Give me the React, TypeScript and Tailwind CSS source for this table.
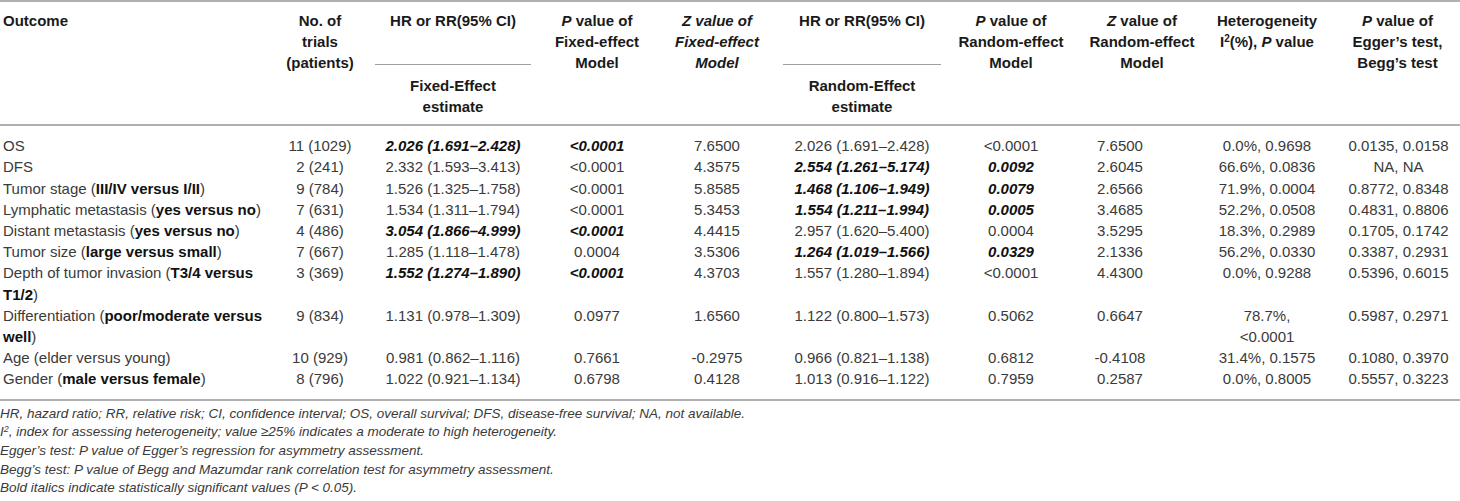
import type { ReactNode } from "react";

const GRID =
  "grid grid-cols-[275px_90px_176px_112px_128px_162px_136px_126px_124px_131px]";

type Cell = string | { b: string } | ReactNode[];

type Row = {
  outcome: ReactNode;
  cells: Cell[];
};

const B = ({ children }: { children: ReactNode }) => (
  <b className="font-bold text-[#111]">{children}</b>
);

const rows: Row[] = [
  {
    outcome: "OS",
    cells: ["11 (1029)", { b: "2.026 (1.691–2.428)" }, { b: "<0.0001" }, "7.6500", "2.026 (1.691–2.428)", "<0.0001", "7.6500", "0.0%, 0.9698", "0.0135, 0.0158"],
  },
  {
    outcome: "DFS",
    cells: ["2 (241)", "2.332 (1.593–3.413)", "<0.0001", "4.3575", { b: "2.554 (1.261–5.174)" }, { b: "0.0092" }, "2.6045", "66.6%, 0.0836", "NA, NA"],
  },
  {
    outcome: (
      <>
        Tumor stage (<B>III/IV versus I/II</B>)
      </>
    ),
    cells: ["9 (784)", "1.526 (1.325–1.758)", "<0.0001", "5.8585", { b: "1.468 (1.106–1.949)" }, { b: "0.0079" }, "2.6566", "71.9%, 0.0004", "0.8772, 0.8348"],
  },
  {
    outcome: (
      <>
        Lymphatic metastasis (<B>yes versus no</B>)
      </>
    ),
    cells: ["7 (631)", "1.534 (1.311–1.794)", "<0.0001", "5.3453", { b: "1.554 (1.211–1.994)" }, { b: "0.0005" }, "3.4685", "52.2%, 0.0508", "0.4831, 0.8806"],
  },
  {
    outcome: (
      <>
        Distant metastasis (<B>yes versus no</B>)
      </>
    ),
    cells: ["4 (486)", { b: "3.054 (1.866–4.999)" }, { b: "<0.0001" }, "4.4415", "2.957 (1.620–5.400)", "0.0004", "3.5295", "18.3%, 0.2989", "0.1705, 0.1742"],
  },
  {
    outcome: (
      <>
        Tumor size (<B>large versus small</B>)
      </>
    ),
    cells: ["7 (667)", "1.285 (1.118–1.478)", "0.0004", "3.5306", { b: "1.264 (1.019–1.566)" }, { b: "0.0329" }, "2.1336", "56.2%, 0.0330", "0.3387, 0.2931"],
  },
  {
    outcome: (
      <>
        <span className="block">
          Depth of tumor invasion (<B>T3/4 versus</B>
        </span>
        <span className="block">
          <B>T1/2</B>)
        </span>
      </>
    ),
    cells: ["3 (369)", { b: "1.552 (1.274–1.890)" }, { b: "<0.0001" }, "4.3703", "1.557 (1.280–1.894)", "<0.0001", "4.4300", "0.0%, 0.9288", "0.5396, 0.6015"],
  },
  {
    outcome: (
      <>
        <span className="block">
          Differentiation (<B>poor/moderate versus</B>
        </span>
        <span className="block">
          <B>well</B>)
        </span>
      </>
    ),
    cells: [
      "9 (834)",
      "1.131 (0.978–1.309)",
      "0.0977",
      "1.6560",
      "1.122 (0.800–1.573)",
      "0.5062",
      "0.6647",
      [<span key="a" className="block">78.7%,</span>, <span key="b" className="block">&lt;0.0001</span>],
      "0.5987, 0.2971",
    ],
  },
  {
    outcome: "Age (elder versus young)",
    cells: ["10 (929)", "0.981 (0.862–1.116)", "0.7661", "-0.2975", "0.966 (0.821–1.138)", "0.6812", "-0.4108", "31.4%, 0.1575", "0.1080, 0.3970"],
  },
  {
    outcome: (
      <>
        Gender (<B>male versus female</B>)
      </>
    ),
    cells: ["8 (796)", "1.022 (0.921–1.134)", "0.6798", "0.4128", "1.013 (0.916–1.122)", "0.7959", "0.2587", "0.0%, 0.8005", "0.5557, 0.3223"],
  },
];

// per-column padding for the numeric cells (col 2..10)
const cellPad = [
  "px-[8px]",
  "px-[10px]",
  "px-[4px]",
  "px-[4px]",
  "px-[4px]",
  "px-[4px]",
  "pl-[4px] pr-[48px]",
  "px-[11px]",
  "pl-[16px] pr-[8px]",
];

function Value({ cell }: { cell: Cell }) {
  if (typeof cell === "string") return <>{cell}</>;
  if (Array.isArray(cell)) return <>{cell}</>;
  if (cell && typeof cell === "object" && "b" in cell)
    return <span className="font-bold italic text-[#111]">{cell.b}</span>;
  return null;
}

function HeadCell({ children, className = "" }: { children: ReactNode; className?: string }) {
  return <div className={`pt-[7.5px] pb-[7px] text-center ${className}`}>{children}</div>;
}

function Line({ children }: { children: ReactNode }) {
  return <span className="block whitespace-nowrap">{children}</span>;
}

function EstimateHead({ label, sub, rule }: { label: string; sub: ReactNode; rule: string }) {
  return (
    <div className="flex flex-col pt-[7.5px] pb-[7px] text-center">
      <div>{label}</div>
      <div className={`mt-[33px] h-px bg-[#a0a0a0] ${rule}`} />
      <div className="mt-[10px]">{sub}</div>
    </div>
  );
}

export default function App() {
  return (
    <div className="w-[1460px] h-[501px] bg-white font-['Liberation_Sans',Arial,sans-serif] text-[15px] leading-[21.2px] text-[#3a3a3a]">
      <div className="border-t-2 border-[#b0b0b0]">
        <div className={`${GRID} border-b-2 border-[#b0b0b0] font-bold text-[#1a1a1a]`}>
          <HeadCell className="!text-left pl-[3px]">Outcome</HeadCell>
          <HeadCell>
            <Line>No. of</Line>
            <Line>trials</Line>
            <Line>(patients)</Line>
          </HeadCell>
          <EstimateHead
            label="HR or RR(95% CI)"
            sub={
              <>
                <Line>Fixed-Effect</Line>
                <Line>estimate</Line>
              </>
            }
            rule="mx-[10px]"
          />
          <HeadCell>
            <Line>
              <i>P</i> value of
            </Line>
            <Line>Fixed-effect</Line>
            <Line>Model</Line>
          </HeadCell>
          <HeadCell className="italic">
            <Line>Z value of</Line>
            <Line>Fixed-effect</Line>
            <Line>Model</Line>
          </HeadCell>
          <EstimateHead
            label="HR or RR(95% CI)"
            sub={
              <>
                <Line>Random-Effect</Line>
                <Line>estimate</Line>
              </>
            }
            rule="mx-[2px]"
          />
          <HeadCell>
            <Line>
              <i>P</i> value of
            </Line>
            <Line>Random-effect</Line>
            <Line>Model</Line>
          </HeadCell>
          <HeadCell>
            <Line>
              <i>Z</i> value of
            </Line>
            <Line>Random-effect</Line>
            <Line>Model</Line>
          </HeadCell>
          <HeadCell>
            <Line>Heterogeneity</Line>
            <Line>
              I<sup className="text-[10px]">2</sup>(%), <i>P</i> value
            </Line>
          </HeadCell>
          <HeadCell className="pl-[6px]">
            <Line>
              <i>P</i> value of
            </Line>
            <Line>Egger’s test,</Line>
            <Line>Begg’s test</Line>
          </HeadCell>
        </div>

        <div className="border-b-2 border-[#b0b0b0] pt-[9px] pb-[9px]">
          {rows.map((row, i) => (
            <div key={i} className={GRID}>
              <div className="pl-[3px] pr-[6px]">{row.outcome}</div>
              {row.cells.map((c, j) => (
                <div key={j} className={`text-center ${cellPad[j]}`}>
                  <Value cell={c} />
                </div>
              ))}
            </div>
          ))}
        </div>
      </div>

      <div className="pt-[4px] text-[13.5px] italic leading-[18.7px] text-[#3a3a3a]">
        <p>
          HR, hazard ratio; RR, relative risk; CI, confidence interval; OS, overall survival; DFS, disease-free survival; NA, not available.
        </p>
        <p>
          I<sup className="text-[9px]">2</sup>, index for assessing heterogeneity; value ≥25% indicates a moderate to high heterogeneity.
        </p>
        <p>Egger’s test: P value of Egger’s regression for asymmetry assessment.</p>
        <p>Begg’s test: P value of Begg and Mazumdar rank correlation test for asymmetry assessment.</p>
        <p>Bold italics indicate statistically significant values (P &lt; 0.05).</p>
      </div>
    </div>
  );
}
